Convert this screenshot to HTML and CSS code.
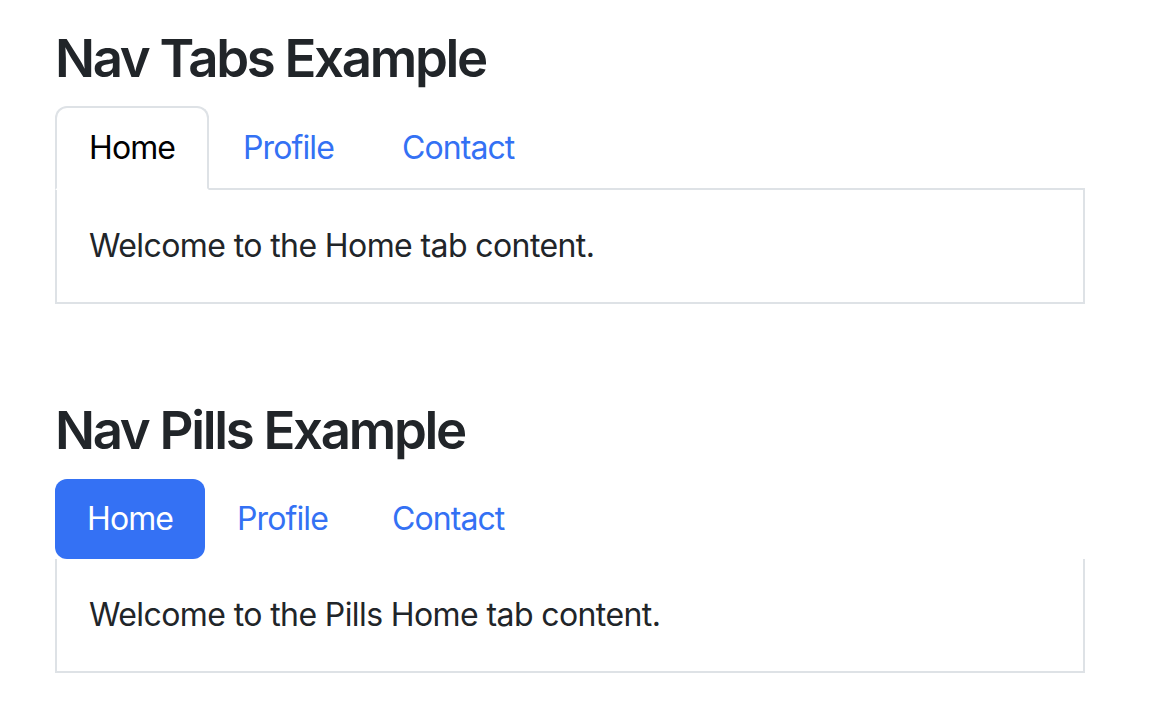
FILE: index.html
```html
<!DOCTYPE html>
<html lang="en">
<head>
<meta charset="utf-8">
<title>Nav Tabs and Pills</title>
<link rel="stylesheet" href="styles.css">
</head>
<body>
<div class="container">
  <h2 class="title">Nav Tabs Example</h2>
  <ul class="nav nav-tabs">
    <li class="nav-item"><a class="nav-link active" href="#home">Home</a></li>
    <li class="nav-item"><a class="nav-link" href="#profile">Profile</a></li>
    <li class="nav-item"><a class="nav-link" href="#contact">Contact</a></li>
  </ul>
  <div class="tab-content">
    <p>Welcome to the Home tab content.</p>
  </div>

  <h2 class="title second">Nav Pills Example</h2>
  <ul class="nav nav-pills">
    <li class="nav-item"><a class="nav-link active" href="#phome">Home</a></li>
    <li class="nav-item"><a class="nav-link" href="#pprofile">Profile</a></li>
    <li class="nav-item"><a class="nav-link" href="#pcontact">Contact</a></li>
  </ul>
  <div class="tab-content">
    <p>Welcome to the Pills Home tab content.</p>
  </div>
</div>
</body>
</html>
```

FILE: styles.css
```css
html, body {
  margin: 0;
  padding: 0;
  background: #ffffff;
}

body {
  font-family: Inter, "Liberation Sans", Arial, sans-serif;
  color: #212529;
  font-size: 32px;
  line-height: 48px;
  letter-spacing: -0.6px;
}

.container {
  width: 1030px;
  margin-left: 55px;
  padding-top: 27px;
}

.title {
  font-size: 52.75px;
  line-height: 63.3px;
  font-weight: 600;
  letter-spacing: -2.3px;
  margin: 0 0 16px;
  color: #212529;
}

.title.second {
  margin-top: 95px;
}

.nav {
  display: flex;
  list-style: none;
  margin: 0;
  padding: 0;
}

.nav-link {
  display: block;
  padding: 16px 32px;
  font-size: 32px;
  line-height: 48px;
  letter-spacing: -0.9px;
  color: #3471f4;
  text-decoration: none;
}

.nav-tabs {
  border-bottom: 2px solid #dee2e6;
}

.nav-tabs .nav-link {
  border: 2px solid transparent;
  border-top-left-radius: 12px;
  border-top-right-radius: 12px;
  margin-bottom: -2px;
}

.nav-tabs .nav-link.active {
  color: #000000;
  background: #ffffff;
  border-color: #dee2e6 #dee2e6 #ffffff;
}

.nav-pills .nav-link {
  border-radius: 12px;
}

.nav-pills .nav-link.active {
  color: #ffffff;
  background: #3471f4;
}

.tab-content {
  border: 2px solid #dee2e6;
  border-top: 0;
  padding: 32px;
}

.tab-content p {
  margin: 0;
}
```
